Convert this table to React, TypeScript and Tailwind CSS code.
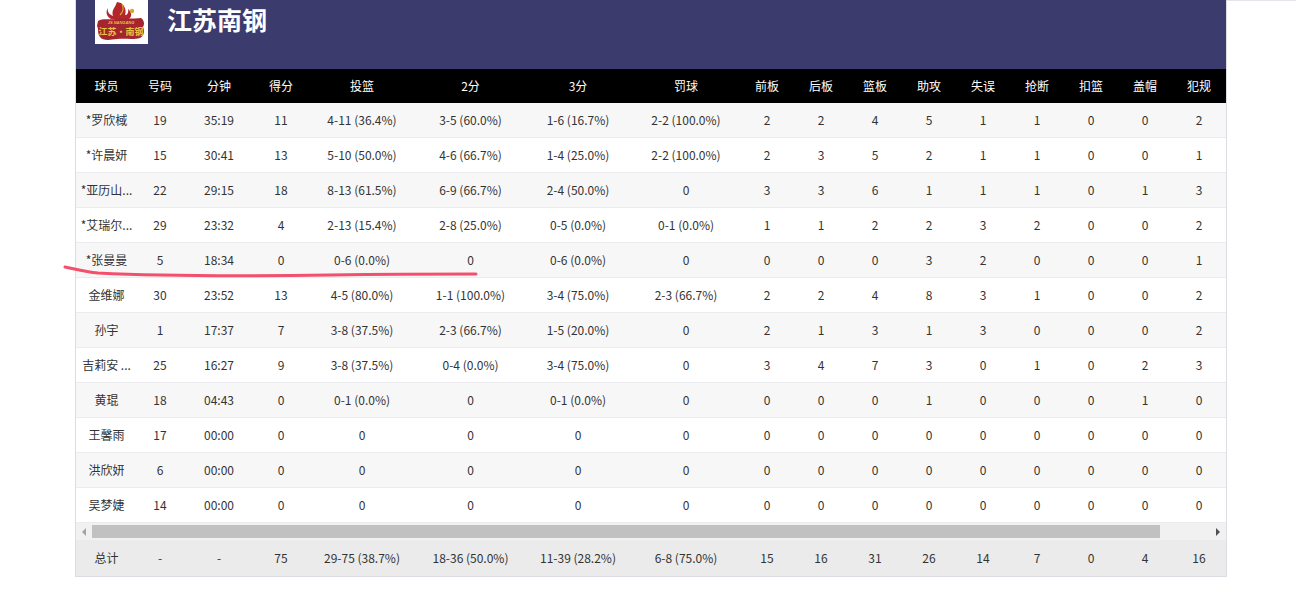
import React from 'react';

type Row = (string | number)[];

const headers = ['球员', '号码', '分钟', '得分', '投篮', '2分', '3分', '罚球', '前板', '后板', '篮板', '助攻', '失误', '抢断', '扣篮', '盖帽', '犯规'];

const rows: Row[] = [
  ['*罗欣棫', 19, '35:19', 11, '4-11 (36.4%)', '3-5 (60.0%)', '1-6 (16.7%)', '2-2 (100.0%)', 2, 2, 4, 5, 1, 1, 0, 0, 2],
  ['*许晨妍', 15, '30:41', 13, '5-10 (50.0%)', '4-6 (66.7%)', '1-4 (25.0%)', '2-2 (100.0%)', 2, 3, 5, 2, 1, 1, 0, 0, 1],
  ['*亚历山...', 22, '29:15', 18, '8-13 (61.5%)', '6-9 (66.7%)', '2-4 (50.0%)', 0, 3, 3, 6, 1, 1, 1, 0, 1, 3],
  ['*艾瑞尔...', 29, '23:32', 4, '2-13 (15.4%)', '2-8 (25.0%)', '0-5 (0.0%)', '0-1 (0.0%)', 1, 1, 2, 2, 3, 2, 0, 0, 2],
  ['*张曼曼', 5, '18:34', 0, '0-6 (0.0%)', 0, '0-6 (0.0%)', 0, 0, 0, 0, 3, 2, 0, 0, 0, 1],
  ['金维娜', 30, '23:52', 13, '4-5 (80.0%)', '1-1 (100.0%)', '3-4 (75.0%)', '2-3 (66.7%)', 2, 2, 4, 8, 3, 1, 0, 0, 2],
  ['孙宇', 1, '17:37', 7, '3-8 (37.5%)', '2-3 (66.7%)', '1-5 (20.0%)', 0, 2, 1, 3, 1, 3, 0, 0, 0, 2],
  ['吉莉安 ...', 25, '16:27', 9, '3-8 (37.5%)', '0-4 (0.0%)', '3-4 (75.0%)', 0, 3, 4, 7, 3, 0, 1, 0, 2, 3],
  ['黄琨', 18, '04:43', 0, '0-1 (0.0%)', 0, '0-1 (0.0%)', 0, 0, 0, 0, 1, 0, 0, 0, 1, 0],
  ['王馨雨', 17, '00:00', 0, 0, 0, 0, 0, 0, 0, 0, 0, 0, 0, 0, 0, 0],
  ['洪欣妍', 6, '00:00', 0, 0, 0, 0, 0, 0, 0, 0, 0, 0, 0, 0, 0, 0],
  ['吴梦婕', 14, '00:00', 0, 0, 0, 0, 0, 0, 0, 0, 0, 0, 0, 0, 0, 0],
];

const totals: Row = ['总计', '-', '-', 75, '29-75 (38.7%)', '18-36 (50.0%)', '11-39 (28.2%)', '6-8 (75.0%)', 15, 16, 31, 26, 14, 7, 0, 4, 16];

// the table is wider than its box: the last track stays out of view
const cols = 'grid grid-cols-[61px_46px_72px_52px_110px_107px_108px_108px_54px_54px_54px_54px_54px_54px_54px_54px_54px_72px]';

const Logo: React.FC = () => (
  <div className="w-[53px] h-[44px] bg-white overflow-hidden">
    <svg viewBox="0 0 53 44" className="w-full h-full">
      <path d="M22 2 C20 8 16 10 18 16 C14 14 12 12 13 8 C10 12 12 17 16 19 L34 19 C38 16 36 11 33 9 C34 13 32 15 30 15 C32 10 29 5 26 3 Z" fill="#b3262b" />
      <path d="M27 4 C29 8 28 12 25 15" stroke="#d9a43a" strokeWidth="1.2" fill="none" />
      <circle cx="37" cy="11" r="2.2" fill="#d9a43a" />
      <path d="M3 21 C8 18 14 20 20 19 C28 18 38 19 46 18 C49 20 50 24 48 27 C50 31 49 36 45 38 C38 40 30 38 22 39 C15 40 8 41 5 37 C2 33 4 29 2 26 Z" fill="#a3262e" />
      <text x="26" y="24" textAnchor="middle" fontSize="4" fontWeight="700" fontStyle="italic" fill="#e8c340" fontFamily="'Liberation Sans', sans-serif">JS NANGANG</text>
      <text x="26" y="35" textAnchor="middle" fontSize="9" fontWeight="700" fill="#e8c340" fontFamily="'Noto Sans CJK SC', sans-serif">江苏·南钢</text>
    </svg>
  </div>
);

const App: React.FC = () => {
  return (
    <div className="relative min-h-screen bg-white text-[#333] text-[12px] font-['Noto_Sans_CJK_SC','Noto_Sans',sans-serif]">
      <div className="flex">
        <div className="w-[75px] shrink-0" />

        <div className="w-[1152px] shrink-0 border-x border-b border-[#dadee3]">
          {/* Team header */}
          <div className="h-[69px] bg-[#3c3b6d] flex items-start gap-[19px] pl-[19px]">
            <Logo />
            <h2 className="text-white text-[25px] font-bold leading-none mt-[7px] font-['Noto_Sans_CJK_SC',sans-serif]">江苏南钢</h2>
          </div>

          {/* Box score */}
          <div className="overflow-hidden">
            <div className="w-[1222px]">
              <div className={`${cols} h-[34px] bg-black text-white items-center text-center`}>
                {headers.map((h) => (
                  <div key={h}>{h}</div>
                ))}
              </div>
              {rows.map((r, i) => (
                <div
                  key={i}
                  className={`${cols} h-[35px] items-center text-center border-b border-[#ebebf0] ${i % 2 === 0 ? 'bg-[#f7f7f8]' : 'bg-white'}`}
                >
                  {r.map((c, j) => (
                    <div key={j} className="whitespace-nowrap overflow-hidden">{c}</div>
                  ))}
                </div>
              ))}
            </div>
          </div>

          {/* horizontal scrollbar */}
          <div className="h-[17px] bg-[#f1f1f1] flex items-center">
            <div className="w-[16px] flex justify-center">
              <div className="w-0 h-0 border-y-[4px] border-y-transparent border-r-[4px] border-r-[#a3a3a3]" />
            </div>
            <div className="flex-1 h-full py-[2px] pr-[49px]">
              <div className="h-full bg-[#c1c1c1]" />
            </div>
            <div className="w-[17px] flex justify-center">
              <div className="w-0 h-0 border-y-[4px] border-y-transparent border-l-[4px] border-l-[#505050]" />
            </div>
          </div>

          <div className="overflow-hidden">
            <div className={`${cols} w-[1222px] h-[36px] bg-[#ebebeb] items-center text-center`}>
              {totals.map((c, j) => (
                <div key={j}>{c}</div>
              ))}
            </div>
          </div>
        </div>

        <div className="flex-1 border-t border-[#e3e6ea]" />
      </div>

      {/* red pen mark under the 张曼曼 row */}
      <svg className="absolute left-0 top-0 pointer-events-none" width="500" height="300">
        <path d="M65 267 C75 269 85 272 98 273 C160 276 260 276 330 275 C400 274 450 274 476 274" stroke="#f2506c" strokeWidth="3" fill="none" strokeLinecap="round" />
      </svg>
    </div>
  );
};

export default App;
